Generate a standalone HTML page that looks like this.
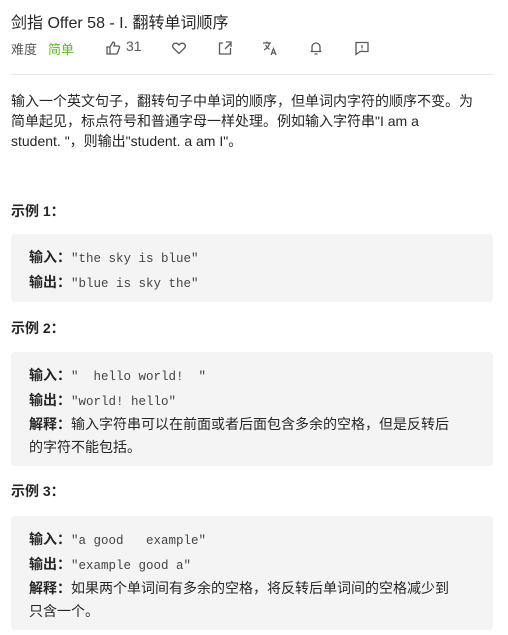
<!DOCTYPE html>
<html><head><meta charset="utf-8"><style>
body{margin:0;width:508px;height:635px;overflow:hidden;background:#fff;font-family:"Liberation Sans","Noto Sans CJK SC",sans-serif;color:#262626;}
.t{position:absolute;left:11px;top:9px;font-size:16px;color:#262626;}
.meta{position:absolute;left:11px;top:39px;font-size:13px;color:#595959;height:18px;width:480px}
.meta span{position:absolute;top:0}
.hr{position:absolute;left:11px;top:74px;width:482px;height:1px;background:#e8e8e8}
.p{position:absolute;left:11px;top:91px;width:482px;font-size:14px;line-height:20px;color:#262626}
.h{position:absolute;left:11px;font-size:14px;font-weight:bold;}
.box{position:absolute;left:11px;width:446px;background:#f4f4f4;border-radius:4px;padding:12px 18px 0 18px;font-size:14px;line-height:22.5px;color:#262626}
.in{width:436px}
.box b{font-weight:bold}
code{font-family:"Liberation Mono","DejaVu Sans Mono",monospace;font-size:12.5px;color:#444;white-space:pre}
svg{position:absolute;top:1px}
</style></head><body>
<div class="t">剑指 Offer 58 - I. 翻转单词顺序</div>
<div class="meta">
<span style="left:0">难度</span><span style="left:37px;color:#5cb82a">简单</span>
<svg style="left:94px" width="16" height="16" viewBox="0 0 16 16" fill="none" stroke="#595959" stroke-width="1.3"><path d="M2 7h3v7H2zM5 7l3-5c1 0 2 1 1.5 2.5L9 6h4.5c.8 0 1.3.8 1 1.5l-2 5.5c-.2.6-.6 1-1.2 1H5"/></svg>
<span style="left:115px;font-size:14px;top:-1px">31</span>
<svg style="left:160px" width="16" height="16" viewBox="0 0 16 16" fill="none" stroke="#595959" stroke-width="1.3"><path d="M8 13.5L2.5 8C1 6.5 1.5 3.5 4.5 3.2 6 3 7.3 4 8 5c.7-1 2-2 3.5-1.8 3 .3 3.5 3.3 2 4.8z"/></svg>
<svg style="left:206px" width="16" height="16" viewBox="0 0 16 16" fill="none" stroke="#595959" stroke-width="1.3"><path d="M6 3H2.5v11h11V8M9 2h5v5M8 9l6-6"/></svg>
<svg style="left:251px" width="16" height="16" viewBox="0 0 16 16" fill="none" stroke="#595959" stroke-width="1.2"><path d="M1 3h8M5 1.5V3M7.5 3C7 6 5 8.5 2 10M3.5 5c1 2 2.5 3.5 4 4.5M9 15l2.5-6.5L14 15M10 13h3"/></svg>
<svg style="left:297px" width="16" height="16" viewBox="0 0 16 16" fill="none" stroke="#595959" stroke-width="1.3"><path d="M4 11.5V7a4 4 0 018 0v4.5M2.5 11.5h11M6.5 14h3"/></svg>
<svg style="left:343px" width="16" height="16" viewBox="0 0 16 16" fill="none" stroke="#595959" stroke-width="1.3"><path d="M2 2.5h12v9H6l-4 3zM8 5v3.2M8 9.5v.8"/></svg>
</div>
<div class="hr"></div>
<div class="p">输入一个英文句子，翻转句子中单词的顺序，但单词内字符的顺序不变。为<br>简单起见，标点符号和普通字母一样处理。例如输入字符串"I am a<br>student. "，则输出"student. a am I"。</div>
<div class="h" style="top:201px">示例 1：</div>
<div class="box" style="top:234px;height:56px"><b>输入：</b><code>"the sky is blue"</code><br><b>输出：</b><code>"blue is sky the"</code></div>
<div class="h" style="top:318px">示例 2：</div>
<div class="box" style="top:352px;height:102px"><b>输入：</b><code>"  hello world!  "</code><br><b>输出：</b><code>"world! hello"</code><br><b>解释：</b>输入字符串可以在前面或者后面包含多余的空格，但是反转后<br>的字符不能包括。</div>
<div class="h" style="top:481px">示例 3：</div>
<div class="box" style="top:516px;height:102px"><b>输入：</b><code>"a good   example"</code><br><b>输出：</b><code>"example good a"</code><br><b>解释：</b>如果两个单词间有多余的空格，将反转后单词间的空格减少到<br>只含一个。</div>
</body></html>
